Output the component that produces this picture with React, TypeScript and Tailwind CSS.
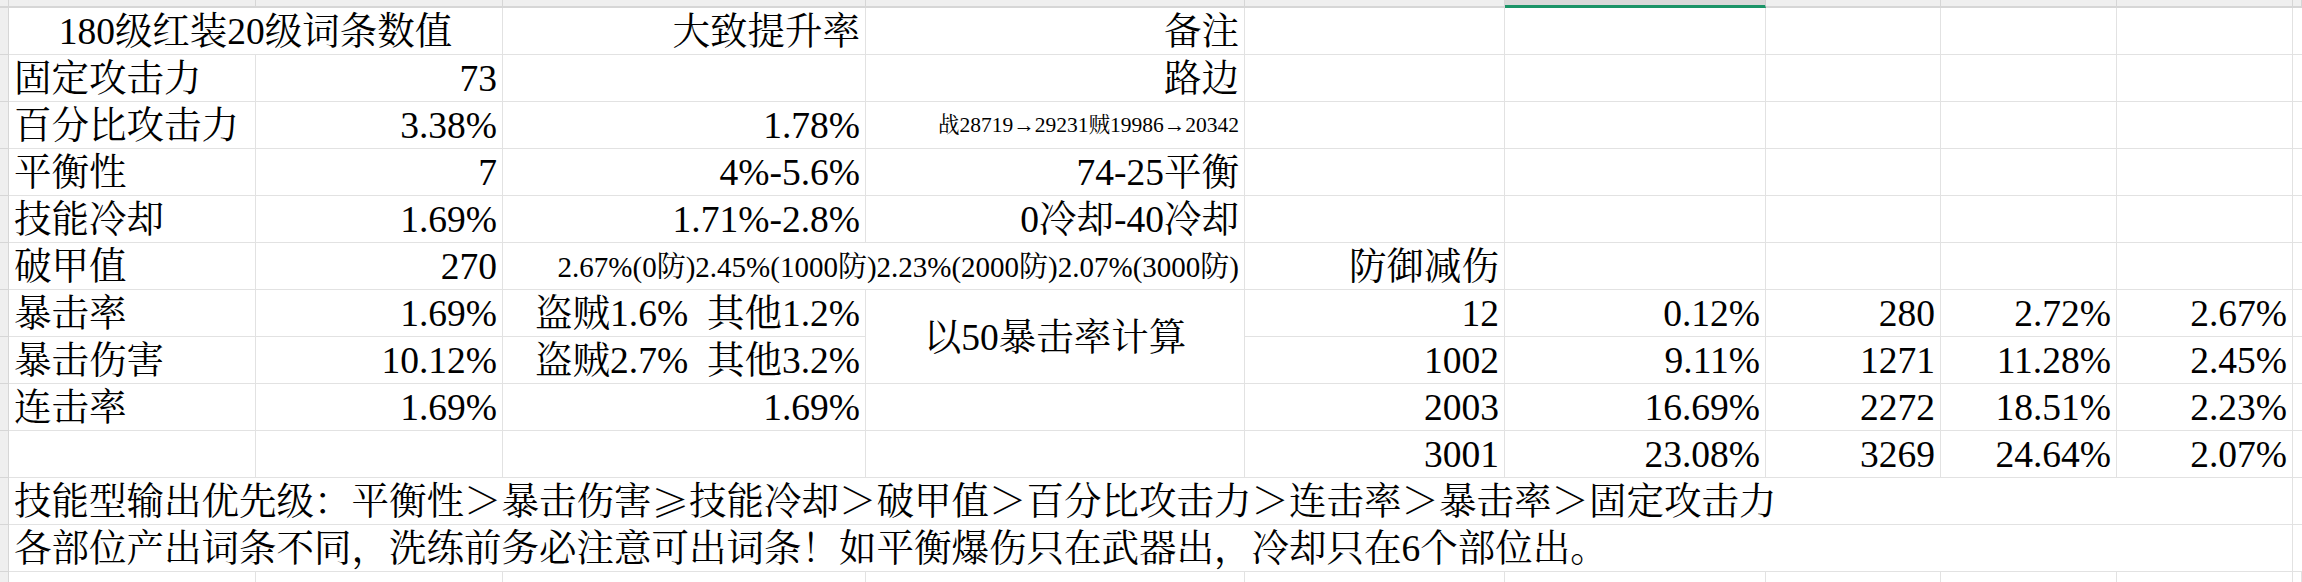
import React, { FC, ReactNode } from 'react';
import clsx from 'clsx';

type CellDef = {
  t?: ReactNode;
  a?: 'l' | 'r' | 'c';
  span?: string;
  size?: string;
};

const rows: CellDef[][] = [
  [
    { t: '180级红装20级词条数值', a: 'c', span: 'col-span-2' },
    { t: '大致提升率', a: 'r' },
    { t: '备注', a: 'r' },
    {}, {}, {}, {}, {}, {},
  ],
  [
    { t: '固定攻击力' },
    { t: '73', a: 'r' },
    {},
    { t: '路边', a: 'r' },
    {}, {}, {}, {}, {}, {},
  ],
  [
    { t: '百分比攻击力' },
    { t: '3.38%', a: 'r' },
    { t: '1.78%', a: 'r' },
    { t: '战28719→29231贼19986→20342', a: 'r', size: 'text-[21.5px]' },
    {}, {}, {}, {}, {}, {},
  ],
  [
    { t: '平衡性' },
    { t: '7', a: 'r' },
    { t: '4%-5.6%', a: 'r' },
    { t: '74-25平衡', a: 'r' },
    {}, {}, {}, {}, {}, {},
  ],
  [
    { t: '技能冷却' },
    { t: '1.69%', a: 'r' },
    { t: '1.71%-2.8%', a: 'r' },
    { t: '0冷却-40冷却', a: 'r' },
    {}, {}, {}, {}, {}, {},
  ],
  [
    { t: '破甲值' },
    { t: '270', a: 'r' },
    { t: '2.67%(0防)2.45%(1000防)2.23%(2000防)2.07%(3000防)', a: 'r', span: 'col-span-2', size: 'text-[29px]' },
    { t: '防御减伤', a: 'r' },
    {}, {}, {}, {}, {},
  ],
  [
    { t: '暴击率' },
    { t: '1.69%', a: 'r' },
    { t: '盗贼1.6%  其他1.2%', a: 'r' },
    { t: '以50暴击率计算', a: 'c', span: 'row-span-2' },
    { t: '12', a: 'r' },
    { t: '0.12%', a: 'r' },
    { t: '280', a: 'r' },
    { t: '2.72%', a: 'r' },
    { t: '2.67%', a: 'r' },
    {},
  ],
  [
    { t: '暴击伤害' },
    { t: '10.12%', a: 'r' },
    { t: '盗贼2.7%  其他3.2%', a: 'r' },
    { t: '1002', a: 'r' },
    { t: '9.11%', a: 'r' },
    { t: '1271', a: 'r' },
    { t: '11.28%', a: 'r' },
    { t: '2.45%', a: 'r' },
    {},
  ],
  [
    { t: '连击率' },
    { t: '1.69%', a: 'r' },
    { t: '1.69%', a: 'r' },
    {},
    { t: '2003', a: 'r' },
    { t: '16.69%', a: 'r' },
    { t: '2272', a: 'r' },
    { t: '18.51%', a: 'r' },
    { t: '2.23%', a: 'r' },
    {},
  ],
  [
    {}, {}, {}, {},
    { t: '3001', a: 'r' },
    { t: '23.08%', a: 'r' },
    { t: '3269', a: 'r' },
    { t: '24.64%', a: 'r' },
    { t: '2.07%', a: 'r' },
    {},
  ],
  [
    {
      t: (
        <>
          技能型输出优先级：平衡性＞暴击伤害
          <span className="[font-family:'Noto_Serif_CJK_SC',serif]">≥</span>
          技能冷却＞破甲值＞百分比攻击力＞连击率＞暴击率＞固定攻击力
        </>
      ),
      span: 'col-span-9',
    },
    {},
  ],
  [
    {
      t: '各部位产出词条不同，洗练前务必注意可出词条！如平衡爆伤只在武器出，冷却只在6个部位出。',
      span: 'col-span-9',
    },
    {},
  ],
];

const Cell: FC<{ c: CellDef }> = ({ c }) => (
  <div
    className={clsx(
      'flex items-center whitespace-pre border-b border-r border-[#e2e2e2] px-[5px] pt-[2px] leading-none text-black',
      c.span,
      c.a === 'r' && 'justify-end',
      c.a === 'c' && 'justify-center',
      c.size ?? 'text-[37.5px]',
    )}
  >
    {c.t}
  </div>
);

const App: FC = () => {
  const cols = Array.from({ length: 10 }, (_, i) => i);

  return (
    <div className="h-[582px] w-[2302px] overflow-hidden bg-white [font-family:'Liberation_Serif','Times_New_Roman','Noto_Serif_CJK_SC','Noto_Sans_CJK_SC',serif]">
      <div className="grid h-full grid-cols-[9px_247px_247px_363px_379px_260px_261px_175px_176px_176px_9px] grid-rows-[8px_repeat(12,47px)_10px]">
        {/* column header strip */}
        <div className="border-b-2 border-r border-[#d6d6d6] bg-[#efefef]" />
        {cols.map((i) =>
          i === 5 ? (
            <div key={i} className="border-b-[3px] border-r border-b-[#1b9467] border-r-[#d0d0d0] bg-[#d9d9d9]" />
          ) : (
            <div key={i} className="border-b-2 border-r border-[#d6d6d6] bg-[#efefef]" />
          ),
        )}

        {rows.map((r, ri) => (
          <React.Fragment key={ri}>
            <div className="border-b border-r border-[#d6d6d6] bg-[#efefef]" />
            {r.map((c, ci) => (
              <Cell key={ci} c={c} />
            ))}
          </React.Fragment>
        ))}

        {/* partial row at the bottom */}
        <div className="border-r border-[#d6d6d6] bg-[#efefef]" />
        {cols.map((i) => (
          <div key={i} className="border-r border-[#e2e2e2]" />
        ))}
      </div>
    </div>
  );
};

export default App;
